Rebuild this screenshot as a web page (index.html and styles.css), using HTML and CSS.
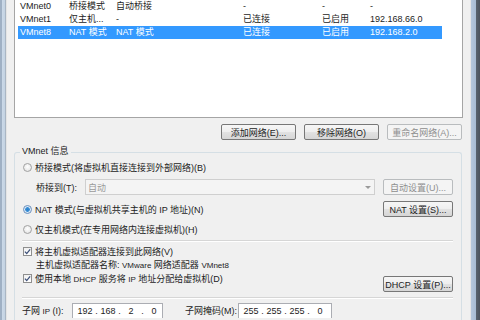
FILE: index.html
```html
<!DOCTYPE html>
<html lang="zh-CN">
<head>
    <meta charset="UTF-8">
    <title>虚拟网络编辑器</title>
    <link rel="stylesheet" href="styles.css">
</head>
<body>
    <div class="window">
        <div class="frame-left"></div>
        <div class="dialog">
            <div class="net-list">
                <div class="net-row">
                    <span>VMnet0</span><span>桥接模式</span><span>自动桥接</span><span>-</span><span>-</span><span>-</span>
                </div>
                <div class="net-row">
                    <span>VMnet1</span><span>仅主机...</span><span>-</span><span>已连接</span><span>已启用</span><span>192.168.66.0</span>
                </div>
                <div class="net-row selected">
                    <span>VMnet8</span><span>NAT 模式</span><span>NAT 模式</span><span>已连接</span><span>已启用</span><span>192.168.2.0</span>
                </div>
            </div>

            <div class="list-buttons">
                <button class="btn wide">添加网络(E)...</button>
                <button class="btn wide">移除网络(O)</button>
                <button class="btn wide" disabled>重命名网络(A)...</button>
            </div>

            <div class="group">
                <div class="group-title">VMnet 信息</div>

                <div class="row row-bridge">
                    <span class="radio"></span>
                    <span>桥接模式(将虚拟机直接连接到外部网络)(B)</span>
                </div>

                <div class="row row-bridge-to">
                    <span class="field-label">桥接到(T):</span>
                    <div class="combo">
                        <span>自动</span>
                        <span class="combo-arrow"></span>
                    </div>
                    <button class="btn side" disabled>自动设置(U)...</button>
                </div>

                <div class="row row-nat">
                    <span class="radio checked"></span>
                    <span>NAT 模式(与虚拟机共享主机的 IP 地址)(N)</span>
                    <button class="btn side push">NAT 设置(S)...</button>
                </div>

                <div class="row row-host">
                    <span class="radio"></span>
                    <span>仅主机模式(在专用网络内连接虚拟机)(H)</span>
                </div>

                <div class="separator sep1"></div>

                <div class="row row-chk1">
                    <span class="checkbox">
                        <svg viewBox="0 0 8 8" width="7" height="7"><path d="M1 4.2 L3.1 6.3 L7 1.5" fill="none" stroke="#3c4f78" stroke-width="1.4"/></svg>
                    </span>
                    <span>将主机虚拟适配器连接到此网络(V)</span>
                </div>

                <div class="row row-adapter">
                    <span>主机虚拟适配器名称: <span class="latin">VMware</span> 网络适配器 <span class="latin">VMnet8</span></span>
                </div>

                <div class="row row-dhcp">
                    <div class="dhcp-check">
                        <span class="checkbox">
                            <svg viewBox="0 0 8 8" width="7" height="7"><path d="M1 4.2 L3.1 6.3 L7 1.5" fill="none" stroke="#3c4f78" stroke-width="1.4"/></svg>
                        </span>
                        <span>使用本地 <span class="latin">DHCP</span> 服务将 <span class="latin">IP</span> 地址分配给虚拟机(D)</span>
                    </div>
                    <button class="btn side push">DHCP 设置(P)...</button>
                </div>

                <div class="separator sep2"></div>

                <div class="row row-subnet">
                    <span class="subnet-label">子网 <span class="latin">IP</span> (I):</span>
                    <div class="ip-box ip-subnet">
                        <span>192</span><i>.</i><span>168</span><i>.</i><span>2</span><i>.</i><span>0</span>
                    </div>
                    <span class="mask-label">子网掩码(M):</span>
                    <div class="ip-box ip-mask">
                        <span>255</span><i>.</i><span>255</span><i>.</i><span>255</span><i>.</i><span>0</span>
                    </div>
                </div>
            </div>
        </div>
        <div class="frame-right"></div>
    </div>
</body>
</html>
```

FILE: styles.css
```css
* {
    margin: 0;
    padding: 0;
    box-sizing: border-box;
}

body {
    width: 480px;
    height: 320px;
    overflow: hidden;
    background: #f0f0f0;
    font-family: "Liberation Sans", "Noto Sans CJK SC", sans-serif;
    font-size: 9px;
    color: #1c1c1c;
}

.window {
    display: flex;
    height: 320px;
}

.frame-left {
    width: 7px;
    background: linear-gradient(90deg, #9fb0c4 0, #9fb0c4 2px, #cbd9e8 2px, #c3d2e2 5px, #a9b6c4 5px, #a9b6c4 6px, #e4e4e4 6px);
}

.frame-right {
    width: 10px;
    background: linear-gradient(90deg, #e6e6e6 0, #e6e6e6 1px, #b6c8dc 1px, #a7bbd2 6px, #59636e 6px, #4b535c 10px);
}

.dialog {
    flex: 1;
    padding: 0 7px;
    background: #f0f0f0;
}

/* network list */
.net-list {
    height: 118px;
    background: #fff;
    border: 1px solid #a5a5a5;
    border-top: none;
}

.net-row {
    display: grid;
    grid-template-columns: 49px 47px 127px 79px 48px 74px;
    width: 424px;
    height: 13px;
    margin-left: 3px;
    line-height: 13px;
}

.net-row span {
    padding-left: 2px;
    white-space: nowrap;
}

.net-row.selected {
    background: #3399ff;
    color: #fff;
}

.list-buttons {
    display: flex;
    justify-content: flex-end;
    gap: 8px;
    margin-top: 6px;
    padding-right: 1px;
}

/* buttons */
.btn {
    height: 16px;
    font: inherit;
    color: #1c1c1c;
    border: 1px solid #777;
    border-radius: 2px;
    background: linear-gradient(#f6f6f6 0%, #eeeeee 50%, #e2e2e2 50%, #d6d6d6 100%);
    white-space: nowrap;
}

.btn:disabled {
    color: #8e8e8e;
    border-color: #b9bcbe;
    background: #f4f4f4;
}

.btn.wide {
    width: 75px;
}

.btn.side {
    width: 70px;
}

.push {
    margin-left: auto;
}

/* group box */
.group {
    margin-top: 12px;
    margin-right: 1px;
    height: 168px;
    border: 1px solid #d5dfe5;
    border-bottom: none;
    border-radius: 3px 3px 0 0;
    padding: 0 8px;
}

.group-title {
    width: fit-content;
    height: 13px;
    line-height: 13px;
    margin-top: -8px;
    margin-left: -3px;
    padding: 0 2px;
    background: #f0f0f0;
}

.row {
    display: flex;
    align-items: center;
    white-space: nowrap;
}

.row-bridge {
    margin-top: 1px;
    height: 16px;
}

.row-bridge-to {
    margin-top: 4px;
    height: 16px;
    padding-left: 13px;
}

.field-label {
    width: 49px;
}

.combo {
    flex: 1;
    height: 16px;
    margin-right: 8px;
    display: flex;
    align-items: center;
    justify-content: space-between;
    padding: 0 3px 0 2px;
    border: 1px solid #cfcfcf;
    background: #f4f4f4;
    color: #9a9a9a;
}

.combo-arrow {
    width: 0;
    height: 0;
    border-left: 3px solid transparent;
    border-right: 3px solid transparent;
    border-top: 3px solid #9a9a9a;
}

.row-nat {
    margin-top: 6px;
    height: 16px;
}

.row-host {
    margin-top: 4px;
    height: 16px;
}

.radio {
    width: 9px;
    height: 9px;
    margin-right: 3px;
    border-radius: 50%;
    border: 1px solid #a2a2a2;
    background: radial-gradient(circle at 50% 40%, #ffffff 0, #e8e8e8 70%, #d6d6d6 100%);
    flex-shrink: 0;
}

.radio.checked {
    border-color: #6a8fbd;
    background: radial-gradient(circle, #2b7fc9 0, #3a8fd6 2px, #d8e8f5 2.6px, #eaf2f9 100%);
}

.checkbox {
    width: 9px;
    height: 9px;
    margin-right: 3px;
    display: flex;
    align-items: center;
    justify-content: center;
    border: 1px solid #8f8f8f;
    background: linear-gradient(#f0f0f0, #ffffff);
    flex-shrink: 0;
}

.separator {
    margin-left: -1px;
    height: 2px;
    border-top: 1px solid #d6d6d6;
    border-bottom: 1px solid #ffffff;
}

.sep1 {
    margin-top: 3px;
}

.row-chk1 {
    margin-top: 2px;
    height: 14px;
}

.row-adapter {
    height: 12px;
    padding-left: 13px;
}

.latin {
    font-size: 8px;
}

.row-dhcp {
    margin-top: 1px;
    align-items: flex-start;
}

.dhcp-check {
    display: flex;
    align-items: center;
    height: 15px;
}

.row-dhcp .btn {
    margin-top: 5px;
}

.sep2 {
    margin-top: 5px;
}

.row-subnet {
    margin-top: 4px;
    margin-left: -1px;
    align-items: flex-start;
}

.subnet-label,
.mask-label {
    line-height: 16px;
}

.subnet-label {
    width: 50px;
}

.mask-label {
    width: 53px;
    margin-left: 22px;
}

.ip-box {
    height: 15px;
    display: flex;
    align-items: flex-start;
    line-height: 15px;
    border: 1px solid #abadb3;
    border-bottom: none;
    background: #fff;
    padding-left: 4px;
}

.ip-box span {
    width: 16px;
    text-align: center;
}

.ip-box i {
    font-style: normal;
    width: 7px;
    text-align: center;
}

.ip-subnet {
    width: 91px;
}

.ip-mask {
    width: 94px;
}
```
